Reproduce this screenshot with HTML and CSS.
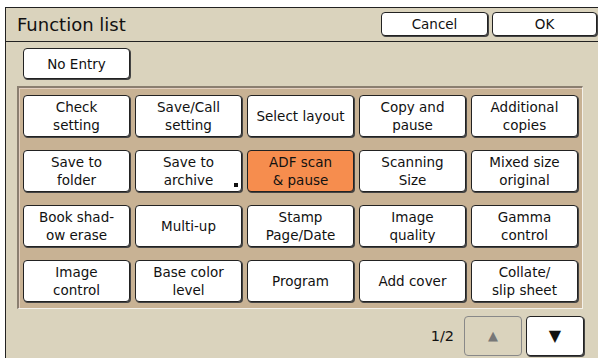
FILE: index.html
```html
<!DOCTYPE html>
<html lang="en">
<head>
    <meta charset="UTF-8">
    <title>Function list</title>
    <link rel="stylesheet" href="styles.css">
</head>
<body>
    <div class="screen">
        <div class="title-bar">
            <span class="title">Function list</span>
            <div class="title-buttons">
                <button class="btn cancel">Cancel</button>
                <button class="btn ok">OK</button>
            </div>
        </div>

        <div class="content">
            <button class="btn no-entry">No Entry</button>

            <div class="panel">
                <div class="grid">
                    <button class="btn key">Check<br>setting</button>
                    <button class="btn key">Save/Call<br>setting</button>
                    <button class="btn key">Select layout</button>
                    <button class="btn key">Copy and<br>pause</button>
                    <button class="btn key">Additional<br>copies</button>

                    <button class="btn key">Save to<br>folder</button>
                    <button class="btn key has-mark">Save to<br>archive<span class="mark"></span></button>
                    <button class="btn key active">ADF scan<br>&amp; pause</button>
                    <button class="btn key">Scanning<br>Size</button>
                    <button class="btn key">Mixed size<br>original</button>

                    <button class="btn key">Book shad-<br>ow erase</button>
                    <button class="btn key">Multi-up</button>
                    <button class="btn key">Stamp<br>Page/Date</button>
                    <button class="btn key">Image<br>quality</button>
                    <button class="btn key">Gamma<br>control</button>

                    <button class="btn key">Image<br>control</button>
                    <button class="btn key">Base color<br>level</button>
                    <button class="btn key">Program</button>
                    <button class="btn key">Add cover</button>
                    <button class="btn key">Collate/<br>slip sheet</button>
                </div>
            </div>

            <div class="pager">
                <span class="page-num">1/2</span>
                <button class="btn page disabled">&#9650;</button>
                <button class="btn page">&#9660;</button>
            </div>
        </div>
    </div>
</body>
</html>
```

FILE: styles.css
```css
body {
    margin: 0;
    background: #ffffff;
    font-family: "DejaVu Sans", Verdana, sans-serif;
    color: #111;
}
.screen {
    margin: 7px 0 0 5px;
    height: 351px;
    background: #dad3bd;
    border-left: 1px solid #222;
    border-top: 1px solid #222;
    box-sizing: border-box;
}
.title-bar {
    display: flex;
    justify-content: space-between;
    align-items: flex-start;
    height: 34px;
    border-bottom: 1px solid #222;
    box-sizing: border-box;
}
.title {
    font-size: 18px;
    padding: 6px 0 0 11px;
}
.title-buttons {
    display: flex;
    gap: 4px;
    padding: 4px 1px 0 0;
}
.btn {
    font-family: "DejaVu Sans", Verdana, sans-serif;
    font-size: 13.5px;
    color: #111;
    background: #fff;
    border: 1px solid #222;
    border-radius: 4px;
    box-shadow: 1px 1px 0 #444;
    padding: 0;
    line-height: 18px;
    cursor: pointer;
}
.cancel {
    width: 107px;
    height: 24px;
}
.ok {
    width: 105px;
    height: 24px;
}
.content {
    padding: 6px 0 0 11px;
}
.no-entry {
    width: 107px;
    height: 31px;
    display: block;
    margin-left: 6px;
}
.panel {
    margin-top: 7px;
    width: 566px;
    box-sizing: border-box;
    background: #c8b294;
    border-top: 2px solid #8a7e70;
    border-left: 2px solid #8a7e70;
    border-right: 1px solid #f4f1ea;
    border-bottom: 1px solid #f4f1ea;
    box-shadow: inset 1px 1px 0 #e3cfbf;
    padding: 7px 5px 6px 4px;
}
.grid {
    display: grid;
    grid-template-columns: repeat(5, 107px);
    grid-auto-rows: 42px;
    column-gap: 5px;
    row-gap: 13px;
}
.key {
    position: relative;
}
.key.active {
    background: #f68d4e;
}
.mark {
    position: absolute;
    right: 3px;
    bottom: 4px;
    width: 4px;
    height: 4px;
    background: #111;
}
.pager {
    display: flex;
    justify-content: flex-end;
    align-items: center;
    gap: 4px;
    padding: 7px 14px 0 0;
}
.page-num {
    font-size: 14.5px;
    margin-right: 6px;
}
.page {
    width: 58px;
    height: 40px;
    font-size: 16px;
}
.page.disabled {
    background: transparent;
    border-color: #888;
    color: #777;
    box-shadow: none;
    font-size: 13px;
}
```
